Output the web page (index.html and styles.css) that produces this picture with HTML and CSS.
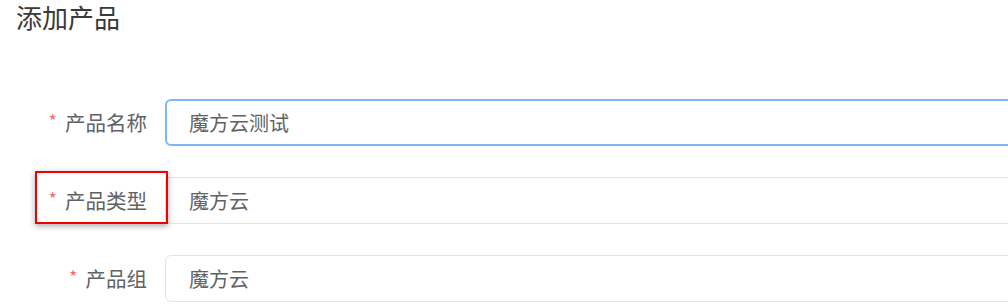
FILE: index.html
```html
<!DOCTYPE html>
<html lang="zh">
<head>
<meta charset="utf-8">
<link rel="stylesheet" href="styles.css">
</head>
<body>
<div class="page">
  <h1 class="title">添加产品</h1>
  <form class="form">
    <div class="row">
      <label class="label"><span class="star">*</span>产品名称</label>
      <div class="input is-focus">魔方云测试</div>
    </div>
    <div class="row">
      <label class="label"><span class="star">*</span>产品类型</label>
      <div class="input">魔方云</div>
      <div class="mark"></div>
    </div>
    <div class="row">
      <label class="label"><span class="star">*</span>产品组</label>
      <div class="input">魔方云</div>
    </div>
  </form>
</div>
</body>
</html>
```

FILE: styles.css
```css
html, body {
  margin: 0;
  padding: 0;
  background: #ffffff;
  overflow: hidden;
}
body {
  font-family: "Noto Sans CJK SC", "Noto Sans", sans-serif;
  width: 1008px;
  height: 307px;
}
.page {
  padding: 2px 0 0 16px;
}
.title {
  margin: 0;
  font-size: 26px;
  line-height: 30px;
  font-weight: 400;
  color: #3a3a3a;
}
.form {
  margin-top: 67px;
  width: 1040px;
  display: flex;
  flex-direction: column;
  gap: 31px;
}
.row {
  position: relative;
  display: flex;
  align-items: center;
  height: 47px;
}
.label {
  width: 131px;
  flex: none;
  padding-right: 18px;
  text-align: right;
  font-size: 20.5px;
  color: #606266;
  line-height: 47px;
  white-space: nowrap;
}
.star {
  color: #f56c6c;
  font-size: 18px;
  margin-right: 8px;
  position: relative;
  top: -3px;
}
.input {
  flex: 1;
  box-sizing: border-box;
  height: 47px;
  border: 1px solid #e2e4ea;
  border-radius: 6px;
  padding-left: 23px;
  font-size: 20px;
  line-height: 45px;
  color: #606266;
}
.input.is-focus {
  border: 2px solid #7db9f7;
  line-height: 43px;
  padding-left: 22px;
}
.mark {
  position: absolute;
  left: 19px;
  top: -6px;
  width: 129px;
  height: 49px;
  border: 2px solid #f20000;
  box-shadow: 0 2px 6px rgba(0, 0, 0, 0.35);
}
```
